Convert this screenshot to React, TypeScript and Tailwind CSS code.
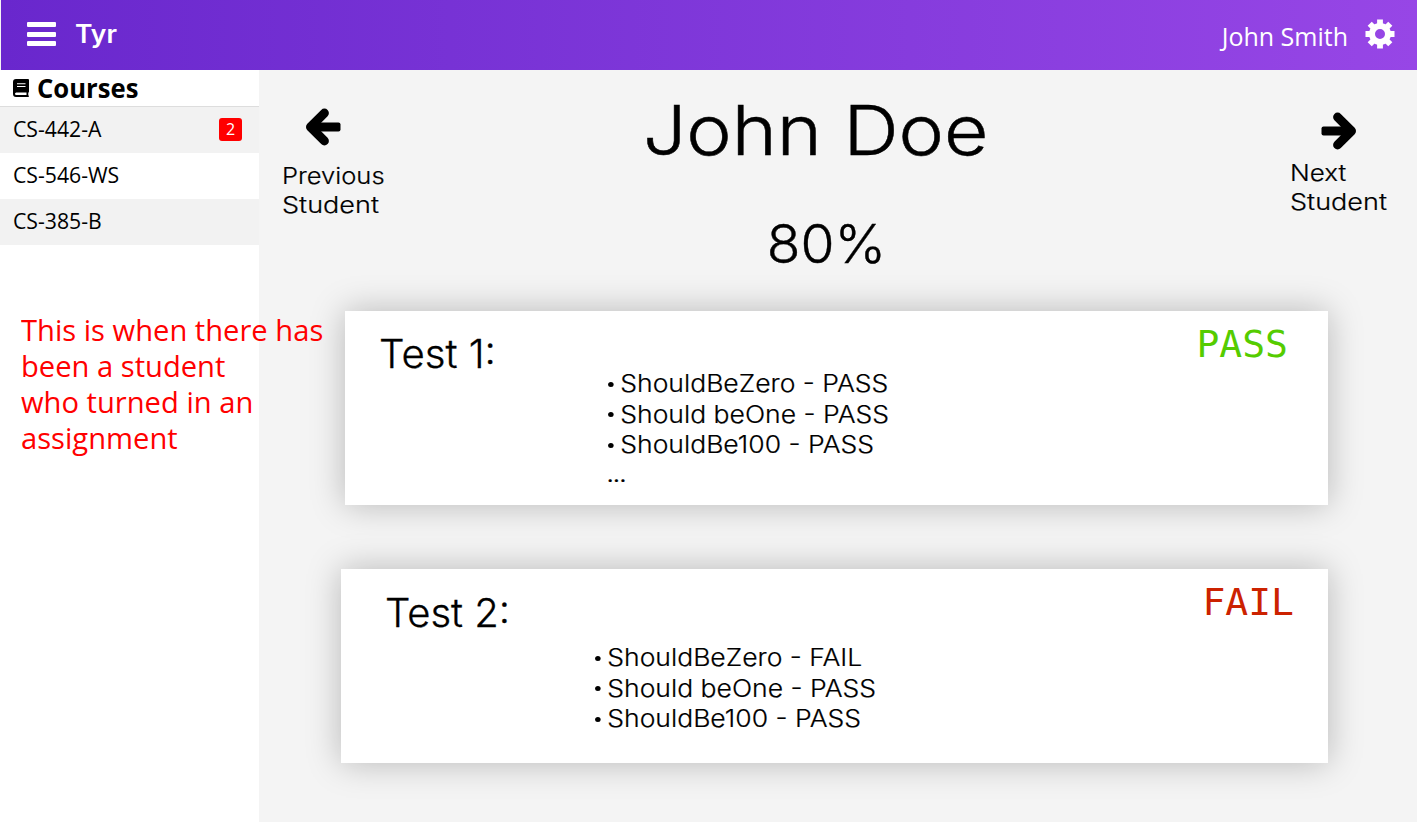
import type { ReactNode } from "react";

const sans = "font-['Open_Sans','Noto_Sans',sans-serif]";

function Arrow({ className }: { className?: string }) {
  return (
    <svg viewBox="0 0 36 38" className={className} fill="none">
      <rect x="0.5" y="14.5" width="28" height="9" rx="2" fill="#000" />
      <path d="M16.6 5.1L30.5 19L16.6 32.9" stroke="#000" strokeWidth="9" strokeLinecap="round" strokeLinejoin="round" />
    </svg>
  );
}

function Gear() {
  return (
    <svg viewBox="0 0 30 30" className="h-[30px] w-[30px]" fill="none" stroke="#fff">
      <circle cx="15" cy="15" r="8" strokeWidth="6" />
      <g strokeWidth="5.8">
        <path d="M15 0.5V6M15 24V29.5M0.5 15H6M24 15H29.5M4.7 4.7L8.5 8.5M21.5 21.5L25.3 25.3M4.7 25.3L8.5 21.5M21.5 8.5L25.3 4.7" />
      </g>
    </svg>
  );
}

function Book() {
  return (
    <svg viewBox="0 0 16 18" className="h-[18px] w-4" fill="#000">
      <path fillRule="evenodd" d="M3 0H15Q16 0 16 1V12.5Q16 13.3 15.4 13.6Q15 15 15.4 16.4Q16 16.6 16 17.2Q16 18 15 18H3Q0 18 0 15V3Q0 0 3 0ZM3.2 13.5Q2 13.7 2 14.7Q2 16 3.2 16H13.5V13.5ZM4 4.2V5.3H12.5V4.2ZM4 7V8.1H12.5V7Z" />
    </svg>
  );
}

function Course({ name, shaded, count }: { name: string; shaded?: boolean; count?: number }) {
  return (
    <li className={`flex h-[46px] items-center justify-between pl-[13px] pr-[17px] ${shaded ? "bg-[#f2f2f2]" : "bg-white"}`}>
      <span className="origin-left scale-x-[1.01] whitespace-nowrap text-[21px]">{name}</span>
      {count !== undefined && (
        <span className="mb-[2px] flex h-[23px] w-[23px] items-center justify-center rounded-[3px] bg-[#ff0000] text-[16px] text-white">{count}</span>
      )}
    </li>
  );
}

function TestCard({ children, className }: { children: ReactNode; className: string }) {
  return (
    <section className={`flex h-[194px] bg-white shadow-[0_0_32px_rgba(0,0,0,0.25)] ${className}`}>{children}</section>
  );
}

const firstResults = ["ShouldBeZero - PASS", "Should beOne - PASS", "ShouldBe100 - PASS"];
const secondResults = ["ShouldBeZero - FAIL", "Should beOne - PASS", "ShouldBe100 - PASS"];

function Results({ items, more }: { items: string[]; more?: boolean }) {
  return (
    <ul className="origin-left scale-x-[1.105] text-[24px] leading-[30.5px] font-[350] whitespace-nowrap [-webkit-text-stroke:0.2px]">
      {items.map((item) => (
        <li key={item} className="flex items-center gap-[7px]">
          <span className="ml-px h-[5px] w-[5px] rounded-full bg-black" />
          <span className="-ml-px">{item}</span>
        </li>
      ))}
      {more && <li className="text-[19px] font-medium">...</li>}
    </ul>
  );
}

export default function App() {
  return (
    <div className="flex h-[822px] w-[1417px] flex-col overflow-hidden bg-[#f4f4f4] font-['Inter',sans-serif] text-black">
      <header className="ml-px flex h-[70px] shrink-0 items-center bg-linear-to-r from-[#6927cd] to-[#9746e6] pl-[26px] pr-[22px] text-white">
        <div className="mb-[2px] flex w-[29px] flex-col gap-[4.7px]">
          <span className="h-[5px] rounded-[1px] bg-white" />
          <span className="h-[5px] rounded-[1px] bg-white" />
          <span className="h-[5px] rounded-[1px] bg-white" />
        </div>
        <span className="ml-[19px] origin-left scale-x-[1.06] text-[25px] font-semibold">Tyr</span>
        <span className={`mt-[3px] ml-auto text-[25px] ${sans}`}>John Smith</span>
        <div className="mb-[2px] ml-[17px]"><Gear /></div>
      </header>
      <div className="flex flex-1">
        <aside className={`w-[259px] shrink-0 bg-white ${sans}`}>
          <h2 className="flex h-[37px] items-center border-b border-[#dddddd] pl-[13px] text-[27px] font-bold">
            <Book />
            <span className="ml-[8px] origin-left scale-x-[0.95]">Courses</span>
          </h2>
          <ul>
            <Course name="CS-442-A" shaded count={2} />
            <Course name="CS-546-WS" />
            <Course name="CS-385-B" shaded />
          </ul>
          <p className="relative z-10 mt-[67px] ml-[21px] w-[330px] origin-left scale-x-[1.005] text-[29px] leading-[36px] text-[#ff0000]">
            This is when there has<br />been a student<br />who turned in an<br />assignment
          </p>
        </aside>
        <main className="flex-1">
          <div className="flex h-[241px] justify-between pl-[23px] pr-[17px]">
            <button className="flex w-[110px] flex-col items-start pt-[37.5px] text-left text-[23px] leading-[29px] font-[350] [-webkit-text-stroke:0.2px]">
              <Arrow className="ml-[23px] h-[38px] w-9 rotate-180" />
              <span className="mt-[16.5px] origin-left scale-x-[1.11]">Previous</span>
              <span className="origin-left scale-x-[1.175]">Student</span>
            </button>
            <div className="mr-[51px] flex flex-col items-center">
              <h1 className="mt-[18px] scale-x-[1.11] text-[69px] leading-[84px] font-[350] [-webkit-text-stroke:0.5px]">John Doe</h1>
              <p className="mt-[38px] ml-[22px] scale-x-[1.04] text-[53px] leading-[68px] font-[350] [-webkit-text-stroke:0.4px]">80%</p>
            </div>
            <button className="flex w-[110px] flex-col items-start pt-[41.5px] text-left text-[23px] leading-[29px] font-[350] [-webkit-text-stroke:0.2px]">
              <Arrow className="ml-[31px] h-[38px] w-9" />
              <span className="mt-[9.5px] origin-left scale-x-[1.13]">Next</span>
              <span className="origin-left scale-x-[1.175]">Student</span>
            </button>
          </div>
          <TestCard className="mr-[89px] ml-[86px]">
            <h3 className="mt-[18px] ml-[34px] w-[228px] origin-left scale-x-[1.03] text-[39px] leading-[50px] font-[350] [-webkit-text-stroke:0.3px]">Test 1:</h3>
            <div className="mt-[58px]"><Results items={firstResults} more /></div>
            <strong className="mt-[8px] mr-[40px] ml-auto font-['DejaVu_Sans_Mono',monospace] text-[38px] leading-[50px] font-normal text-[#55cc00]">PASS</strong>
          </TestCard>
          <TestCard className="mt-[64px] mr-[89px] ml-[82px]">
            <h3 className="mt-[19px] ml-[44px] w-[209px] origin-left scale-x-[1.025] text-[39px] leading-[50px] font-[350] [-webkit-text-stroke:0.3px]">Test 2:</h3>
            <div className="mt-[74px]"><Results items={secondResults} /></div>
            <strong className="mt-[8px] mr-[34px] ml-auto font-['DejaVu_Sans_Mono',monospace] text-[38px] leading-[50px] font-normal text-[#cc2200]">FAIL</strong>
          </TestCard>
        </main>
      </div>
    </div>
  );
}
